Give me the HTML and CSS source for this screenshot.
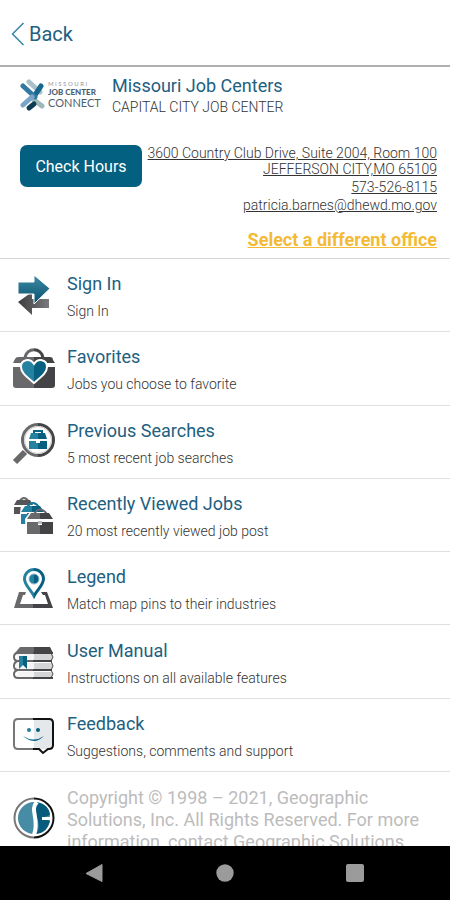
FILE: index.html
```html
<!DOCTYPE html>
<html lang="en">
<head>
<meta charset="utf-8">
<meta name="viewport" content="width=device-width, initial-scale=1">
<title>Missouri Job Centers</title>
<link rel="stylesheet" href="styles.css">
</head>
<body>
<svg class="defs" aria-hidden="true">
  <defs>
    <linearGradient id="teal" x1="0" y1="0" x2="0" y2="1">
      <stop offset="0" stop-color="#3f8ba3"/><stop offset="1" stop-color="#07506f"/>
    </linearGradient>
    <linearGradient id="gray" x1="0" y1="0" x2="1" y2="0">
      <stop offset="0" stop-color="#3c3c3e"/><stop offset="1" stop-color="#7b7b7d"/>
    </linearGradient>
    <linearGradient id="split" x1="0" y1="0" x2="1" y2="0">
      <stop offset=".5" stop-color="#69696b"/><stop offset=".5" stop-color="#444446"/>
    </linearGradient>
    <linearGradient id="tealsplit" x1="0" y1="0" x2="1" y2="0">
      <stop offset=".5" stop-color="#2581a0"/><stop offset=".5" stop-color="#086080"/>
    </linearGradient>
    <linearGradient id="rim" x1="0" y1="0" x2="1" y2="0">
      <stop offset=".5" stop-color="#77777a"/><stop offset=".5" stop-color="#111"/>
    </linearGradient>
  </defs>
</svg>
<header class="topbar">
  <a class="back" href="#">
    <svg class="chevron" viewBox="0 0 14 24" aria-hidden="true"><path d="M12.500 1 L1.500 12 L12.500 23" fill="none" stroke="#3484a5" stroke-width="1.500"/></svg>
    Back
  </a>
</header>
<main class="page">
  <section class="office">
    <div class="brand">
      <svg class="logo" viewBox="0 0 88 36" role="img" aria-label="Missouri Job Center Connect">
        <g stroke-width="5" stroke-linecap="round" fill="none">
          <path d="M9 3 L20 13" stroke="#a9c1c9"/>
          <path d="M14 21 L22 27" stroke="#9fb9b9"/>
          <path d="M15 16 L21 7" stroke="#17668e"/>
          <path d="M3 7 L15 18" stroke="#3278a5"/>
          <path d="M3 26 L12 18" stroke="#7ba5c7"/>
          <path d="M9 29 L14 25" stroke="#0b3c53"/>
        </g>
        <text class="logo-small" x="28" y="7">M I S S O U R I</text>
        <text class="logo-bold" x="28" y="16">JOB CENTER</text>
        <text class="logo-name" x="28" y="28">CONNECT</text>
      </svg>
      <div>
        <h1 class="title">Missouri Job Centers</h1>
        <p class="office-name">CAPITAL CITY JOB CENTER</p>
      </div>
    </div>
    <div class="details">
      <button class="hours" type="button">Check Hours</button>
      <address class="contact">
        <a href="#">3600 Country Club Drive, Suite 2004, Room 100<br>JEFFERSON CITY,MO 65109</a>
        <a class="line" href="#">573-526-8115</a>
        <a class="line" href="#">patricia.barnes@dhewd.mo.gov</a>
      </address>
    </div>
    <a class="change" href="#">Select a different office</a>
  </section>
  <nav class="menu" aria-label="Menu">
    <a class="row" href="#">
      <svg class="icon" viewBox="0 0 42 42" aria-hidden="true">
        <path d="M19 16 V23 H36 V32 H19 V39 L5 26Z" fill="url(#gray)"/>
        <path d="M5 6 H21 V-1 L37 12.500 L21 28 V18 H5Z" fill="url(#teal)" stroke="#fff" stroke-width="1"/>
      </svg>
      <span class="label"><span class="title">Sign In</span><span class="sub">Sign In</span></span>
    </a>
    <a class="row" href="#">
      <svg class="icon" viewBox="0 0 42 42" aria-hidden="true">
        <path d="M12 9 C13 -2 29 -2 30 9" fill="none" stroke="url(#split)" stroke-width="3"/>
        <path d="M5 8 H37 Q40 8 40 11 L42 14 H0 L2 10 Q3 8 5 8Z M0 18 H42 V36 Q42 39 39 39 H3 Q0 39 0 36Z" fill="url(#split)"/>
        <path d="M21 34 C14 28 8 24 8 18 C8 10 17 9 21 15 C25 9 34 10 34 18 C34 24 28 28 21 34Z" fill="url(#tealsplit)" stroke="#fff" stroke-width="2"/>
      </svg>
      <span class="label"><span class="title">Favorites</span><span class="sub">Jobs you choose to favorite</span></span>
    </a>
    <a class="row" href="#">
      <svg class="icon" viewBox="0 0 42 42" aria-hidden="true">
        <path d="M2 39 L12 29" stroke="#69696b" stroke-width="6"/>
        <circle cx="25" cy="17" r="15.500" fill="#fff" stroke="url(#split)" stroke-width="3"/>
        <circle cx="25" cy="17" r="13.500" fill="none" stroke="#ccc" stroke-width="1"/>
        <path d="M21 10 V8 H29 V10" fill="none" stroke="#08668a" stroke-width="2"/>
        <path d="M18 10 H32 L34 16 H16Z M16 18 H23 V20 H27 V18 H34 V26 H16Z" fill="url(#tealsplit)"/>
      </svg>
      <span class="label"><span class="title">Previous Searches</span><span class="sub">5 most recent job searches</span></span>
    </a>
    <a class="row" href="#">
      <svg class="icon" viewBox="0 0 42 42" aria-hidden="true">
        <path d="M6 6 Q11 -2 16 6" fill="none" stroke="#69696b" stroke-width="2"/>
        <path d="M4 4 H17 L20 9 H1Z M1 11 H17 V18 H1Z" fill="#555557"/>
        <path d="M7 17 V29 H14 V17Z M8 9 H28 L31 17 H7Z" fill="#fff"/>
        <path d="M14 11 Q20 3 26 11" fill="none" stroke="#16789b" stroke-width="2"/>
        <path d="M12 10 H27 L31 16 H8Z M8 18 H28 V28 H8Z" fill="url(#tealsplit)"/>
        <path d="M12 23 L17 16 H36 L42 23 V40 H13Z" fill="#fff"/>
        <path d="M21 18 Q27 9 34 18" fill="none" stroke="#69696b" stroke-width="2"/>
        <path d="M18 17 H36 L40 23 H14Z M14 26 H25 V29 H29 V26 H40 V38 H14Z" fill="url(#split)"/>
        <path d="M25 25 H29 V28 H25Z" fill="#bbb"/>
      </svg>
      <span class="label"><span class="title">Recently Viewed Jobs</span><span class="sub">20 most recently viewed job post</span></span>
    </a>
    <a class="row" href="#">
      <svg class="icon" viewBox="0 0 42 42" aria-hidden="true">
        <path d="M13 23 H6 L1 39 H40 L34 23 H28 L30 26 H32 L35 35 H7 L10 26 H12Z" fill="url(#split)"/>
        <path d="M21 27 C18 21 11.500 16 11.500 10 A9.500 9.500 0 0 1 30.500 10 C30.500 16 24 21 21 27Z" fill="#fff" stroke="url(#tealsplit)" stroke-width="3"/>
        <circle cx="21" cy="10" r="5" fill="url(#tealsplit)" stroke="#93b8c8" stroke-width="1"/>
      </svg>
      <span class="label"><span class="title">Legend</span><span class="sub">Match map pins to their industries</span></span>
    </a>
    <a class="row" href="#">
      <svg class="icon" viewBox="0 0 42 42" aria-hidden="true">
        <path d="M4 10 H39 V18 H4Z M3 20 H39 V27 H3Z M4 29 H39 V35 H4Z" fill="#f4f4f4"/>
        <path d="M21 10 H39 V18 H21Z M21 20 H39 V27 H21Z M21 29 H39 V35 H21Z" fill="#d3d5d6"/>
        <path d="M7 4 H37 L40 10 H2Z" fill="url(#split)"/>
        <path d="M40 10 H5 Q1 10 1 14 Q1 18 5 18 H39 M5 18 Q1 19 1 23 Q1 27 5 27 H39 M5 27 Q1 28 1 31 Q1 35 5 35 H40" fill="none" stroke="url(#split)" stroke-width="2"/>
        <path d="M38 10 L40 14 L38 18 M38 18 L40 23 L38 27 M38 27 L40 31 L38 35" fill="none" stroke="#444446" stroke-width="1"/>
        <path d="M6 13 H14 V26 L10 22 L6 26Z" fill="url(#tealsplit)"/>
      </svg>
      <span class="label"><span class="title">User Manual</span><span class="sub">Instructions on all available features</span></span>
    </a>
    <a class="row" href="#">
      <svg class="icon" viewBox="0 0 42 42" aria-hidden="true">
        <path d="M21 4 H40 V33 H21Z" fill="#e4e8ea"/>
        <path d="M5 3 H36 Q40 3 40 7 V29 Q40 33 36 33 H35 L30 37 L26 33 H5 Q1 33 1 29 V7 Q1 3 5 3Z" fill="none" stroke="url(#rim)" stroke-width="2"/>
        <circle cx="16" cy="14" r="2" fill="#2581a0"/><circle cx="25" cy="14" r="2" fill="#086080"/>
        <path d="M10 20 Q21 27 31 20 Q21 30 10 20Z" fill="url(#tealsplit)"/>
      </svg>
      <span class="label"><span class="title">Feedback</span><span class="sub">Suggestions, comments and support</span></span>
    </a>
  </nav>
</main>
<footer class="legal">
  <svg class="icon" viewBox="0 0 42 42" aria-hidden="true">
    <circle cx="21" cy="21" r="19.500" fill="#fff" stroke="url(#rim)" stroke-width="2"/>
    <circle cx="21" cy="21" r="16" fill="#468ca4"/>
    <path d="M23 5 C33 6 37 13 37 18 L29 21 L37 24 C35 32 31 36 23 37 C31 27 19 18 23 5Z" fill="#075b7d"/>
    <path d="M24 5 C16 13 27 22 21 38" fill="none" stroke="#fff" stroke-width="4"/>
    <path d="M38 21.500 H29" fill="none" stroke="#fff" stroke-width="3"/>
  </svg>
  <p class="copyright">Copyright © 1998 – 2021, Geographic Solutions, Inc. All Rights Reserved. For more information, contact Geographic Solutions</p>
</footer>
<div class="system" role="toolbar" aria-label="System navigation">
  <button type="button" aria-label="Back"><svg viewBox="0 0 20 20"><path d="M17 1.500 V18.500 L1 10.500Z" stroke="#9b9b9b" stroke-linejoin="round"/></svg></button>
  <button type="button" aria-label="Home"><svg viewBox="0 0 20 20"><circle cx="10" cy="10" r="8.700"/></svg></button>
  <button type="button" aria-label="Recents"><svg viewBox="0 0 20 20"><rect x="1" y="1" width="18" height="18" rx="2"/></svg></button>
</div>
</body>
</html>
```

FILE: styles.css
```css
* { box-sizing: border-box; }

body {
  margin: 0;
  height: 100vh;
  display: flex;
  flex-direction: column;
  background: #fff;
  color: #333;
  font-family: Roboto, "Liberation Sans", sans-serif;
  font-weight: 400;
}

h1, p { margin: 0; }
a { color: inherit; text-decoration: none; }
button { font-family: inherit; border: 0; cursor: pointer; }
.defs { position: absolute; width: 0; height: 0; }

.topbar {
  flex: none;
  height: 67px;
  display: flex;
  align-items: center;
  padding: 2px 11px 0;
  border-bottom: 2px solid #b0b0b0;
}

.back {
  display: flex;
  align-items: center;
  gap: 4px;
  color: #22607f;
  font-size: 20px;
  line-height: 24px;
}

.chevron { width: 14px; height: 24px; }

.page {
  flex: 1;
  min-height: 0;
  display: flex;
  flex-direction: column;
}

.office {
  display: flex;
  flex-direction: column;
  padding: 8px 13px 7px 20px;
  border-bottom: 1px solid #d8d8d8;
}

.brand { display: flex; gap: 4px; }
.logo { width: 88px; height: 36px; margin-top: 4px; }
.logo text { font-family: Lato, sans-serif; fill: #4f5f70; }
.logo .logo-small { font-size: 6px; fill: #8f959c; }
.logo .logo-bold { font-size: 8px; font-weight: 900; }
.logo .logo-name { font-size: 11px; }

.title {
  color: #22607f;
  font-size: 18px;
  line-height: 22px;
  font-weight: 400;
}

.office-name { font-size: 14px; line-height: 20px; font-weight: 300; }

.details {
  display: flex;
  justify-content: space-between;
  align-items: flex-start;
  margin-top: 28px;
}

.hours {
  flex: none;
  width: 122px;
  height: 42px;
  padding: 0;
  border-radius: 7px;
  background: #046080;
  color: #fff;
  font-size: 16px;
}

.contact {
  flex: 1;
  text-align: right;
  font-size: 14px;
  font-weight: 300;
  font-style: normal;
  line-height: 16px;
  white-space: nowrap;
}

.contact a { display: block; text-decoration: underline; }
.contact .line { margin-top: 2px; }

.change {
  align-self: flex-end;
  margin-top: 16px;
  color: #f4ba35;
  font-size: 18px;
  line-height: 22px;
  font-weight: 700;
  text-decoration: underline;
}

.menu {
  flex: 1;
  display: grid;
  grid-auto-rows: minmax(min-content, 1fr);
}

.row {
  display: flex;
  align-items: center;
  gap: 12px;
  padding: 4px 13px 0;
  border-bottom: 1px solid #e0e0e0;
}

.icon { flex: none; width: 42px; height: 42px; overflow: visible; }
.label { display: flex; flex-direction: column; gap: 6px; }
.sub { font-size: 14px; line-height: 20px; font-weight: 300; }

.legal {
  flex: none;
  height: 74px;
  overflow: hidden;
  display: flex;
  gap: 12px;
  padding: 15px 13px 0;
}

.legal .icon { margin-top: 10px; }

.copyright {
  color: #bcbcbc;
  font-size: 18px;
  line-height: 22px;
}

.system {
  flex: none;
  height: 54px;
  display: flex;
  justify-content: space-between;
  align-items: center;
  padding: 0 85px;
  background: #000;
}

.system button { display: flex; padding: 0; background: none; }
.system svg { width: 20px; height: 20px; fill: #9b9b9b; }
```
